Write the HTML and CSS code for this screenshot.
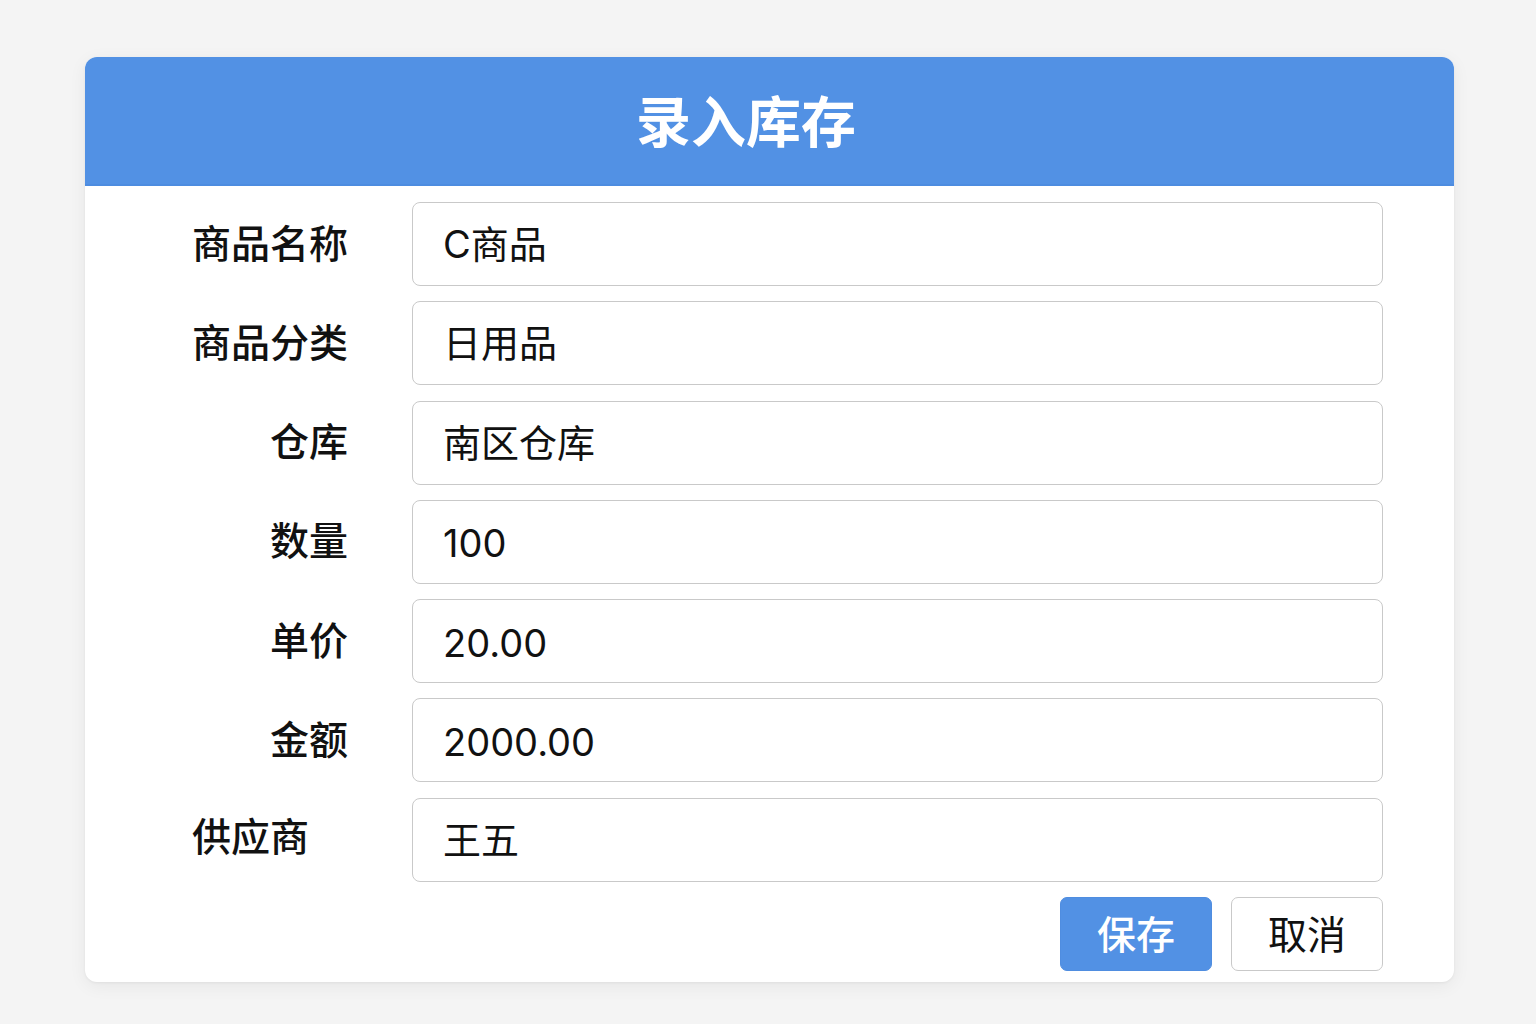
FILE: index.html
```html
<!DOCTYPE html>
<html lang="zh-CN">
<head>
<meta charset="utf-8">
<title>录入库存</title>
<link rel="stylesheet" href="styles.css">
</head>
<body>
<div class="page">
  <div class="card">
    <div class="card-header"><h1 class="title">录入库存</h1></div>
    <form class="form">
      <label class="label">商品名称</label>
      <div class="field">C商品</div>
      <label class="label">商品分类</label>
      <div class="field">日用品</div>
      <label class="label">仓库</label>
      <div class="field">南区仓库</div>
      <label class="label">数量</label>
      <div class="field field-num">100</div>
      <label class="label">单价</label>
      <div class="field field-num">20.00</div>
      <label class="label">金额</label>
      <div class="field field-num">2000.00</div>
      <label class="label label-left">供应商</label>
      <div class="field">王五</div>
      <div class="actions">
        <button type="button" class="btn btn-primary">保存</button>
        <button type="button" class="btn btn-default">取消</button>
      </div>
    </form>
  </div>
</div>
</body>
</html>
```
FILE: styles.css
```css
* { box-sizing: border-box; }
html, body { margin: 0; padding: 0; }
body {
  background: #f4f4f4;
  font-family: "Noto Sans CJK SC", "Noto Sans", sans-serif;
  color: #111;
  width: 1536px;
  height: 1024px;
  overflow: hidden;
}
.page {
  padding: 57px 82px 0 85px;
}
.card {
  width: 1369px;
  height: 925px;
  background: #fff;
  border-radius: 12px;
  box-shadow: 0 4px 18px rgba(0,0,0,0.06), 0 1px 3px rgba(0,0,0,0.05);
  overflow: hidden;
}
.card-header {
  height: 129px;
  background: #5291e4;
  border-bottom: 2px solid #4d8ce0;
  display: flex;
  align-items: center;
  justify-content: center;
  padding-right: 47px;
}
.title {
  margin: 0;
  color: #fff;
  font-size: 55px;
  font-weight: 700;
  line-height: 1;
  padding-bottom: 4px;
}
.form {
  display: grid;
  grid-template-columns: 156px 1fr;
  column-gap: 64px;
  row-gap: 15.3px;
  padding: 16px 71px 0 107px;
}
.label {
  text-align: right;
  font-size: 39px;
  font-weight: 500;
  align-self: center;
  line-height: 1.2;
  color: #111;
  white-space: nowrap;
  margin-top: -6px;
}
.label-left {
  text-align: left;
  margin-top: -10px;
}
.field {
  height: 84px;
  border: 1.5px solid #c9c9c9;
  border-radius: 8px;
  padding-left: 30px;
  padding-bottom: 5px;
  display: flex;
  align-items: center;
  font-family: "Inter", "Noto Sans CJK SC", sans-serif;
  font-size: 38px;
  color: #111;
}
.field-num {
  padding-top: 3px;
  padding-bottom: 0;
}
.actions {
  grid-column: 2;
  display: flex;
  justify-content: flex-end;
  gap: 19px;
}
.btn {
  width: 152px;
  height: 74px;
  border-radius: 7px;
  font-family: "Noto Sans CJK SC", "Noto Sans", sans-serif;
  font-size: 39px;
  line-height: 1;
  padding: 0 0 3px;
  cursor: pointer;
}
.btn-primary {
  background: #5291e4;
  border: 1px solid #4f8de0;
  color: #fff;
  font-weight: 500;
}
.btn-default {
  background: #fff;
  border: 1.5px solid #c9c9c9;
  color: #111;
}
```
